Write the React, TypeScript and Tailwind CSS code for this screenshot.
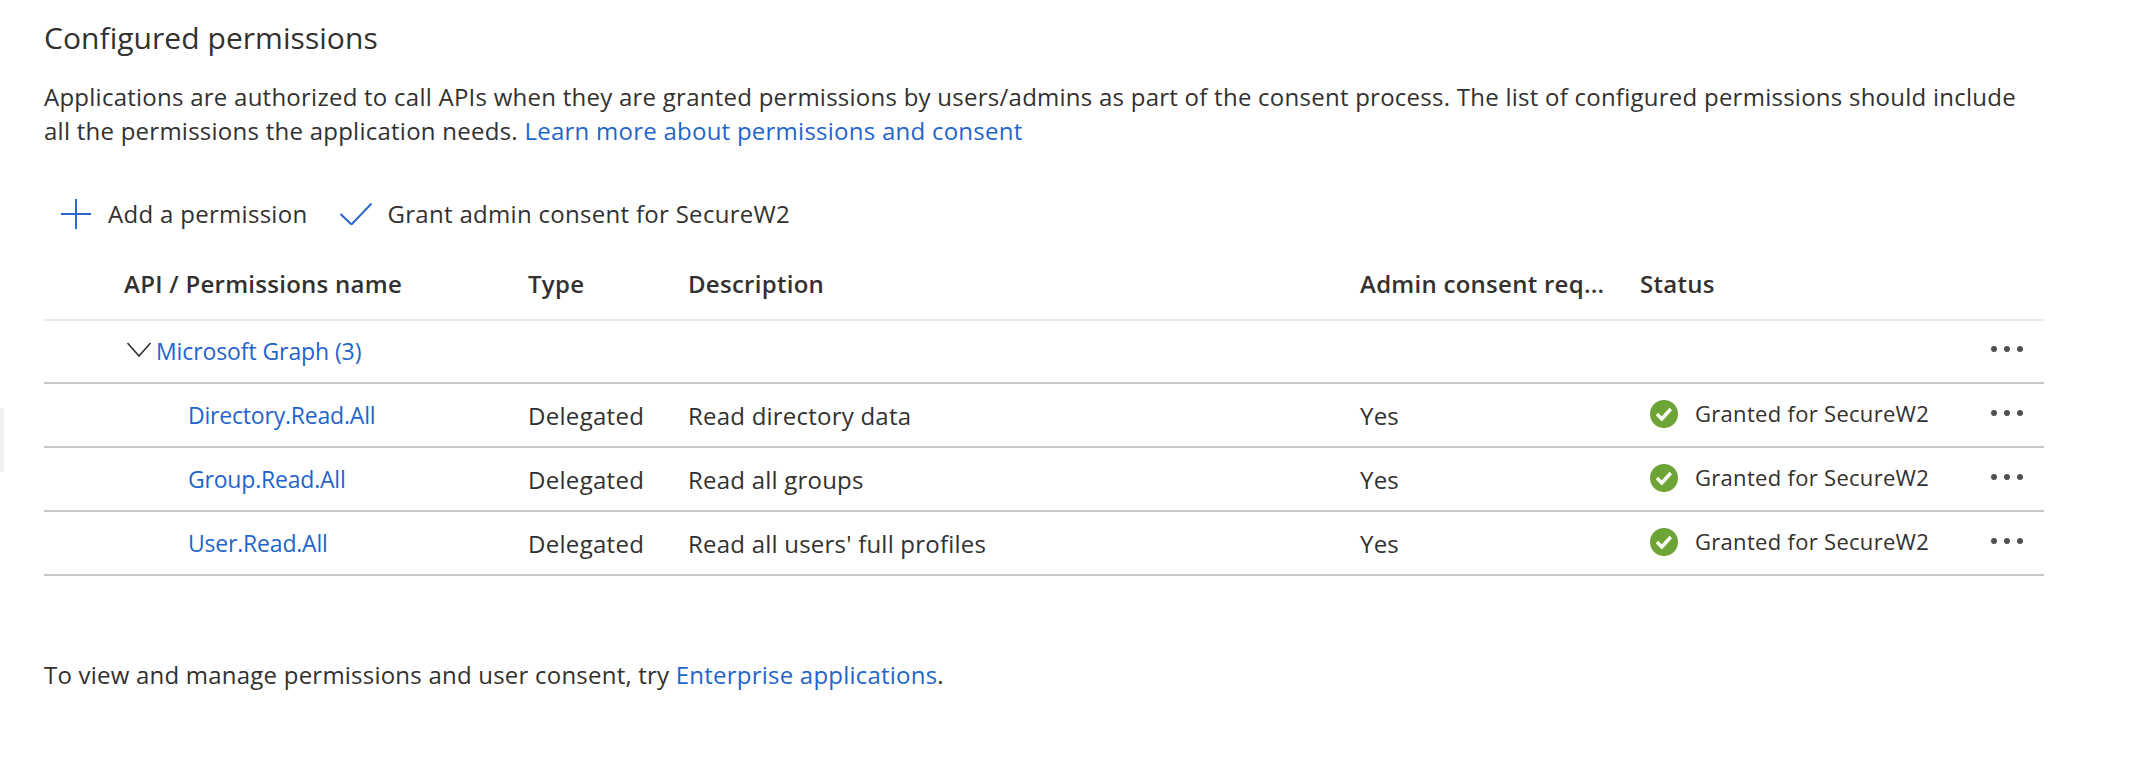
const font = "font-['Open_Sans','Noto_Sans',sans-serif]";

const rows = [
  { name: "Directory.Read.All", description: "Read directory data" },
  { name: "Group.Read.All", description: "Read all groups" },
  { name: "User.Read.All", description: "Read all users' full profiles" },
];

function MoreDots() {
  return (
    <svg width="34" height="8" viewBox="0 0 34 8" className="shrink-0">
      <circle cx="4" cy="4" r="3" fill="#505050" />
      <circle cx="17" cy="4" r="3" fill="#505050" />
      <circle cx="30" cy="4" r="3" fill="#505050" />
    </svg>
  );
}

function GrantedIcon() {
  return (
    <svg width="28" height="28" viewBox="0 0 28 28" className="shrink-0">
      <circle cx="14" cy="14" r="14" fill="#6ea436" />
      <path d="M7 14l4.8 5 9-10" fill="none" stroke="#fff" strokeWidth="3.4" />
    </svg>
  );
}

export default function App() {
  return (
    <div className={`${font} h-[770px] w-[2134px] bg-white pl-[44px] pt-[18px] text-[#323130] relative overflow-hidden`}>
      <div className="absolute left-0 top-[408px] h-[64px] w-[4px] bg-[#f0f0f0]" />

      <h2 className="text-[30px] leading-[40px] font-normal tracking-[0.05px]">Configured permissions</h2>

      <p className="mt-[22px] w-[1990px] text-[24px] leading-[34px] tracking-[0.25px]">
        Applications are authorized to call APIs when they are granted permissions by users/admins as part of the
        consent process. The list of configured permissions should include all the permissions the application needs.{" "}
        <span className="text-[#1f65cc]">Learn more about permissions and consent</span>
      </p>

      <div className="mt-[46px] flex h-[40px] items-center pl-[17px] text-[24px] tracking-[0.3px]">
        <svg width="30" height="30" viewBox="0 0 30 30" className="shrink-0">
          <path d="M15 0v30M0 15h30" stroke="#2b67c9" strokeWidth="2" fill="none" />
        </svg>
        <span className="ml-[17px]">Add a permission</span>
        <svg width="32" height="22" viewBox="0 0 32 22" className="ml-[33px] shrink-0">
          <path d="M0.5 11l11 10.5L31.5 0.5" stroke="#2b67c9" strokeWidth="2" fill="none" />
        </svg>
        <span className="ml-[15px]">Grant admin consent for SecureW2</span>
      </div>

      <div className="mt-[17px] w-[2000px]">
        <div className="flex h-[70px] items-center border-b-2 border-[#e8e8e8] pb-[2px] text-[24px] font-semibold tracking-[0.27px]">
          <span className="ml-[80px] w-[404px]">API / Permissions name</span>
          <span className="w-[160px]">Type</span>
          <span className="w-[672px]">Description</span>
          <span className="w-[280px]">Admin consent req...</span>
          <span>Status</span>
        </div>

        <div className="flex h-[63px] items-center justify-between border-b-2 border-[#c8c8c8] pr-[20px]">
          <div className="ml-[82px] flex items-center text-[23px] tracking-[-0.1px] text-[#1f65cc]">
            <svg width="26" height="16" viewBox="0 0 26 16" className="mb-[4px] shrink-0">
              <path d="M1.5 1l11.5 13L24.5 1" stroke="#323130" strokeWidth="1.6" fill="none" />
            </svg>
            <span className="ml-[4px]">Microsoft Graph (3)</span>
          </div>
          <div className="mb-[6px]">
            <MoreDots />
          </div>
        </div>

        {rows.map((row) => (
          <div key={row.name} className="flex h-[64px] items-center border-b-2 border-[#c8c8c8] pr-[20px]">
            <span className="ml-[144px] w-[340px] text-[23px] tracking-[-0.2px] text-[#1f65cc]">{row.name}</span>
            <span className="mt-[2px] w-[160px] text-[24px] tracking-[0.3px]">Delegated</span>
            <span className="mt-[2px] w-[672px] text-[24px] tracking-[0.22px]">{row.description}</span>
            <span className="mt-[2px] w-[290px] text-[24px] tracking-[0.22px]">Yes</span>
            <div className="mb-[2px]">
              <GrantedIcon />
            </div>
            <span className="mb-[3px] ml-[17px] text-[22px] tracking-[0.3px]">Granted for SecureW2</span>
            <div className="ml-auto mb-[4px]">
              <MoreDots />
            </div>
          </div>
        ))}
      </div>

      <p className="mt-[82px] text-[24px] leading-[34px] tracking-[0.22px]">
        To view and manage permissions and user consent, try{" "}
        <span className="text-[#1f65cc]">Enterprise applications</span>.
      </p>
    </div>
  );
}
